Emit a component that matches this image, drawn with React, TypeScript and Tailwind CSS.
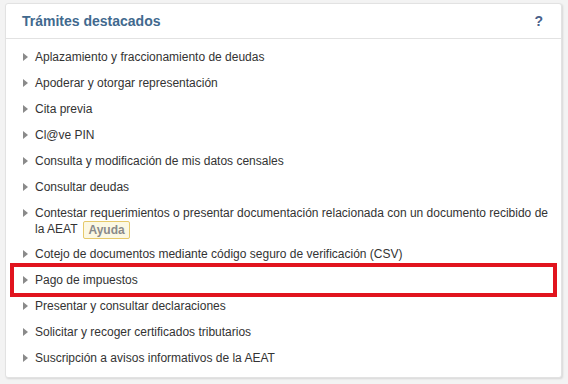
import React from "react";

const items = [
  "Aplazamiento y fraccionamiento de deudas",
  "Apoderar y otorgar representación",
  "Cita previa",
  "Cl@ve PIN",
  "Consulta y modificación de mis datos censales",
  "Consultar deudas",
  "Contestar requerimientos o presentar documentación relacionada con un documento recibido de la AEAT",
  "Cotejo de documentos mediante código seguro de verificación (CSV)",
  "Pago de impuestos",
  "Presentar y consultar declaraciones",
  "Solicitar y recoger certificados tributarios",
  "Suscripción a avisos informativos de la AEAT",
];

function Arrow() {
  return (
    <svg width="5" height="8" viewBox="0 0 5 8" className="mt-[4px] shrink-0">
      <polygon points="0,0 5,4 0,8" fill="#8a8a8a" />
    </svg>
  );
}

export default function App() {
  return (
    <div
      className="h-[384px] bg-[#f3f3f3] pt-[3px] pl-[5px]"
      style={{ fontFamily: '"Liberation Sans", Arial, sans-serif' }}
    >
      <div className="w-[557px] h-[375px] bg-white border border-[#e2e2e2] rounded-[3px] shadow-[1px_1px_2px_rgba(0,0,0,0.12)]">
        <div className="flex items-center justify-between h-[35px] px-4 border-b border-[#e2e2e2]">
          <h2 className="text-[14px] font-bold text-[#41698e]">Trámites destacados</h2>
          <span className="text-[14px] font-bold text-[#4a5f8a] mr-[2px]">?</span>
        </div>
        <ul className="pt-[5px] px-[8px]">
          {items.map((t, i) => (
            <li
              key={t}
              className={
                "flex gap-[7px] py-[5px] pl-[9px] text-[12px] leading-4 text-[#333] " +
                (i === 8 ? "outline-4 outline-[#e1141e] " : "") +
                (i === 6 ? "pb-[4px]" : "")
              }
            >
              <Arrow />
              <span>
                {t}
                {i === 6 && (
                  <span className="ml-[6px] -my-[2px] inline-block align-middle px-[4px] leading-[16px] text-[12px] font-bold text-[#8a8a8a] bg-[#fcf8e3] border border-[#e6c96a] rounded-[2px]">
                    Ayuda
                  </span>
                )}
              </span>
            </li>
          ))}
        </ul>
      </div>
    </div>
  );
}
